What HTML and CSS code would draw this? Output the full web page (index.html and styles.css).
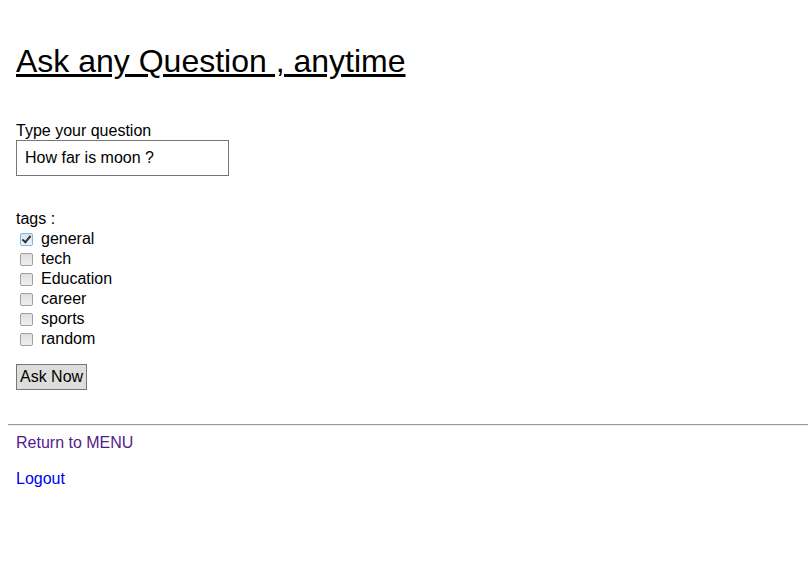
FILE: index.html
```html
<!DOCTYPE html>
<html>
<head>
<meta charset="utf-8">
<link rel="stylesheet" href="styles.css">
</head>
<body>
<div class="page">
  <h1 class="title"><a class="title-link" href="#">Ask any Question , anytime</a></h1>
  <form class="ask-form">
    <label class="field-label" for="q">Type your question</label>
    <input class="q-input" id="q" type="text" value="How far is moon ?">
    <div class="tags-label">tags :</div>
    <div class="tag-list">
      <label class="tag"><input class="tag-box" type="checkbox" checked> general</label>
      <label class="tag"><input class="tag-box" type="checkbox"> tech</label>
      <label class="tag"><input class="tag-box" type="checkbox"> Education</label>
      <label class="tag"><input class="tag-box" type="checkbox"> career</label>
      <label class="tag"><input class="tag-box" type="checkbox"> sports</label>
      <label class="tag"><input class="tag-box" type="checkbox"> random</label>
    </div>
    <button class="ask-btn" type="button">Ask Now</button>
  </form>
</div>
<div class="rule"></div>
<div class="page links">
  <a class="link visited" href="#">Return to MENU</a>
  <a class="link" href="#">Logout</a>
</div>
</body>
</html>
```
FILE: styles.css
```css
html, body {
  margin: 0;
  padding: 0;
  background: #fff;
}
body {
  margin: 8px 0 8px 8px;
  font-family: "Liberation Sans", Arial, sans-serif;
  font-size: 16px;
  color: #000;
}
.page {
  padding: 0 8px;
}
.title {
  margin: 35px 0 0 0;
  font-size: 32px;
  font-weight: normal;
  line-height: 37px;
}
.title-link {
  color: #000;
  text-decoration: underline;
}
.ask-form {
  display: flex;
  flex-direction: column;
  align-items: flex-start;
  margin-top: 42px;
}
.field-label {
  line-height: 18px;
}
.q-input {
  box-sizing: border-box;
  width: 213px;
  height: 36px;
  margin: 0;
  padding: 0 8px;
  border: 1px solid #767676;
  font-family: "Liberation Sans", Arial, sans-serif;
  font-size: 16px;
  color: #000;
}
.tags-label {
  margin-top: 34px;
  line-height: 18px;
}
.tag-list {
  display: flex;
  flex-direction: column;
  margin-top: 1px;
}
.tag {
  display: flex;
  align-items: center;
  height: 20px;
  line-height: 20px;
}
.tag-box {
  appearance: none;
  -webkit-appearance: none;
  box-sizing: border-box;
  width: 13px;
  height: 13px;
  margin: 0 8px 0 4px;
  border: 1px solid #a0a0a0;
  border-radius: 2px;
  background: linear-gradient(#dedede, #f0f0f0);
  position: relative;
}
.tag-box:checked {
  border-color: #80b4ec;
  background: linear-gradient(#d6e4f4, #eef4fb);
}
.tag-box:checked::after {
  content: "";
  position: absolute;
  left: 3px;
  top: 0px;
  width: 3px;
  height: 7px;
  border-right: 2px solid #333;
  border-bottom: 2px solid #333;
  transform: rotate(40deg);
}
.ask-btn {
  margin-top: 15px;
  height: 26px;
  padding: 0 3px;
  background: #dddddd;
  border: 1px solid #767676;
  border-radius: 0;
  font-family: "Liberation Sans", Arial, sans-serif;
  font-size: 16px;
  color: #000;
}
.rule {
  margin-top: 34px;
  height: 1px;
  background: #9a9a9a;
  border-bottom: 1px solid #eeeeee;
}
.links {
  display: flex;
  flex-direction: column;
  align-items: flex-start;
  gap: 18px;
  margin-top: 8px;
}
.link {
  color: #0000ee;
  text-decoration: none;
  line-height: 18px;
}
.link.visited {
  color: #551a8b;
}
```
